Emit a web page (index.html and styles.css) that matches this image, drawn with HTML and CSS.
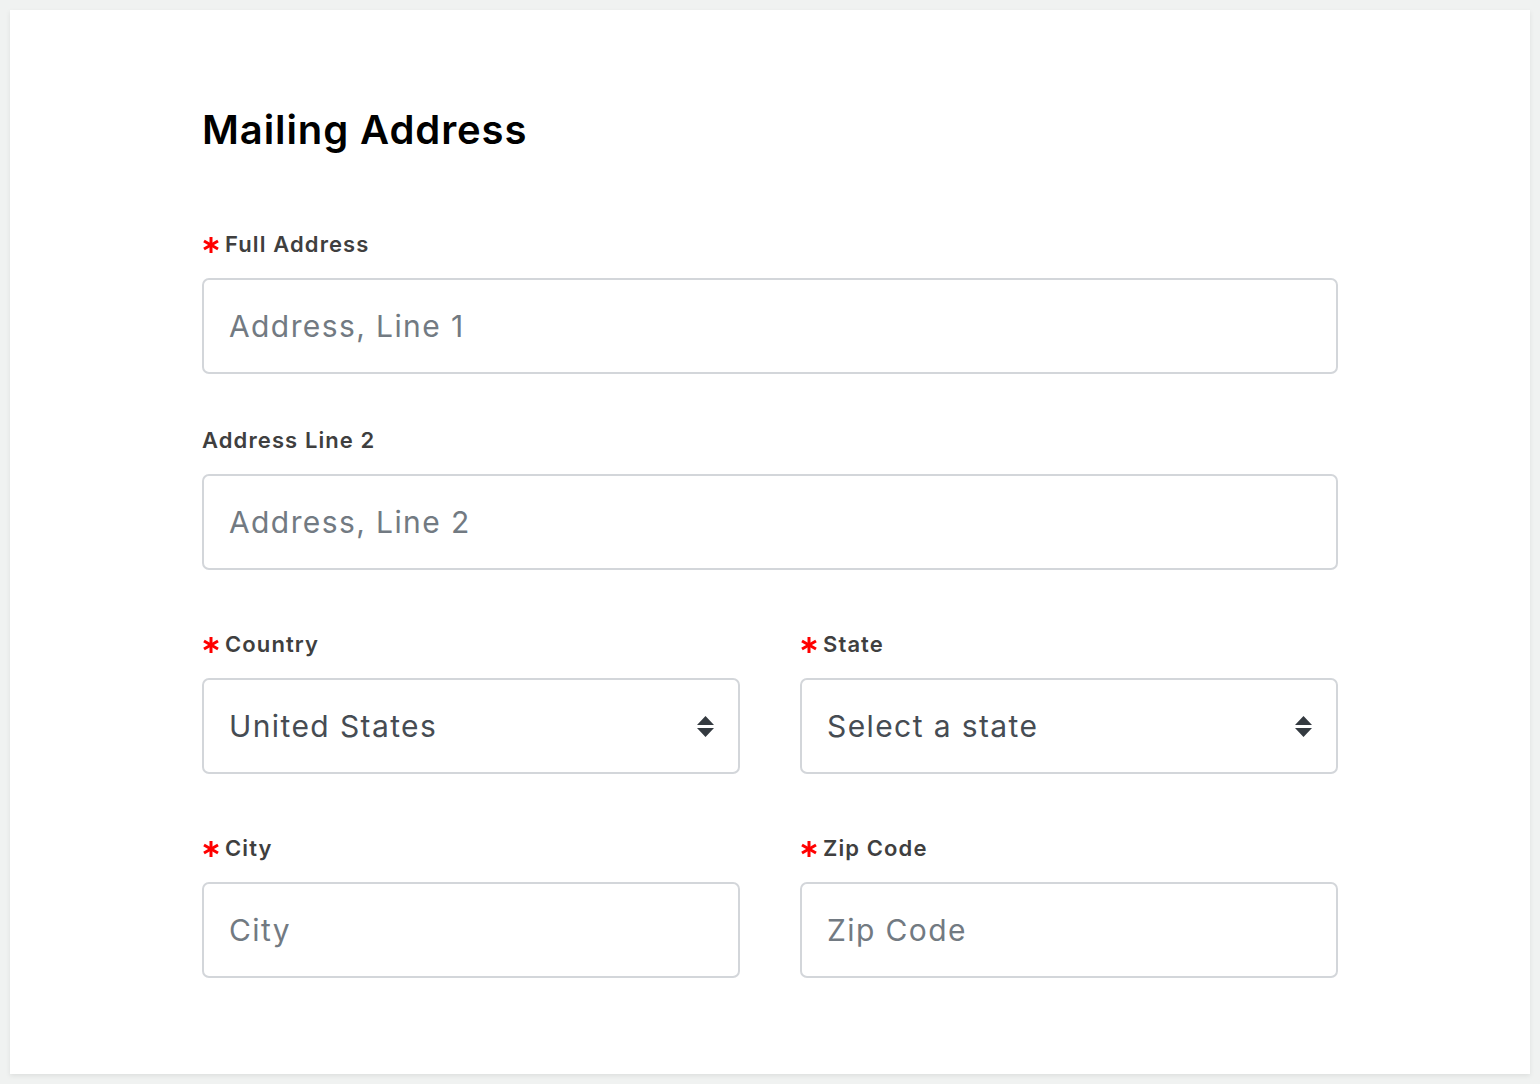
FILE: index.html
```html
<!DOCTYPE html>
<html lang="en">
<head>
<meta charset="utf-8">
<title>Mailing Address</title>
<link rel="stylesheet" href="styles.css">
</head>
<body>
<div class="card">
  <h1 class="title">Mailing Address</h1>

  <div class="field field-first">
    <label class="label"><svg class="req" viewBox="0 0 18 18"><g stroke="#ff0000" stroke-width="3"><line x1="9" y1="1" x2="9" y2="17"/><line x1="2" y1="5" x2="16" y2="13"/><line x1="2" y1="13" x2="16" y2="5"/></g></svg>Full Address</label>
    <div class="input placeholder">Address, Line 1</div>
  </div>

  <div class="field field-second">
    <label class="label">Address Line 2</label>
    <div class="input placeholder">Address, Line 2</div>
  </div>

  <div class="grid">
    <div class="field">
      <label class="label"><svg class="req" viewBox="0 0 18 18"><g stroke="#ff0000" stroke-width="3"><line x1="9" y1="1" x2="9" y2="17"/><line x1="2" y1="5" x2="16" y2="13"/><line x1="2" y1="13" x2="16" y2="5"/></g></svg>Country</label>
      <div class="input select"><span>United States</span><svg class="arrows" viewBox="0 0 17 21"><path d="M8.5 0 L17 9 H0 Z M0 12 H17 L8.5 21 Z" fill="#343a40"/></svg></div>
    </div>
    <div class="field">
      <label class="label"><svg class="req" viewBox="0 0 18 18"><g stroke="#ff0000" stroke-width="3"><line x1="9" y1="1" x2="9" y2="17"/><line x1="2" y1="5" x2="16" y2="13"/><line x1="2" y1="13" x2="16" y2="5"/></g></svg>State</label>
      <div class="input select"><span>Select a state</span><svg class="arrows" viewBox="0 0 17 21"><path d="M8.5 0 L17 9 H0 Z M0 12 H17 L8.5 21 Z" fill="#343a40"/></svg></div>
    </div>
    <div class="field">
      <label class="label"><svg class="req" viewBox="0 0 18 18"><g stroke="#ff0000" stroke-width="3"><line x1="9" y1="1" x2="9" y2="17"/><line x1="2" y1="5" x2="16" y2="13"/><line x1="2" y1="13" x2="16" y2="5"/></g></svg>City</label>
      <div class="input placeholder">City</div>
    </div>
    <div class="field">
      <label class="label"><svg class="req" viewBox="0 0 18 18"><g stroke="#ff0000" stroke-width="3"><line x1="9" y1="1" x2="9" y2="17"/><line x1="2" y1="5" x2="16" y2="13"/><line x1="2" y1="13" x2="16" y2="5"/></g></svg>Zip Code</label>
      <div class="input placeholder">Zip Code</div>
    </div>
  </div>
</div>
</body>
</html>
```

FILE: styles.css
```css
* { box-sizing: border-box; }
html, body { margin: 0; padding: 0; }
body {
  background: #f0f2f1;
  padding: 10px;
  font-family: Inter, "Open Sans", "Liberation Sans", sans-serif;
  width: 1540px;
  height: 1084px;
}
.card {
  background: #ffffff;
  height: 1064px;
  padding: 96px 192px 0 192px;
  box-shadow: 0 2px 5px rgba(0,0,0,0.08);
  display: flex;
  flex-direction: column;
}
.title {
  margin: 0;
  font-size: 40px;
  line-height: 48px;
  font-weight: 600;
  color: #000;
  letter-spacing: 0.9px;
}
.field {
  display: flex;
  flex-direction: column;
  gap: 18px;
}
.field-first { margin-top: 74px; }
.field-second { margin-top: 50px; }
.label {
  display: flex;
  align-items: center;
  font-size: 22px;
  line-height: 32px;
  font-weight: 600;
  color: #3f3f3f;
  letter-spacing: 1.1px;
}
.req {
  width: 18px;
  height: 18px;
  margin: 2px 5px 0 0;
}
.input {
  height: 96px;
  border: 2px solid #d3d6da;
  border-radius: 7px;
  padding: 0 25px;
  display: flex;
  align-items: center;
  font-size: 30px;
  font-weight: 400;
  letter-spacing: 1.4px;
}
.placeholder { color: #727a82; }
.select {
  color: #464c53;
  justify-content: space-between;
}
.arrows {
  width: 17px;
  height: 21px;
  margin-right: -1px;
  margin-top: 1px;
}
.grid {
  margin-top: 58px;
  display: grid;
  grid-template-columns: 1fr 1fr;
  column-gap: 60px;
  row-gap: 58px;
}
```
